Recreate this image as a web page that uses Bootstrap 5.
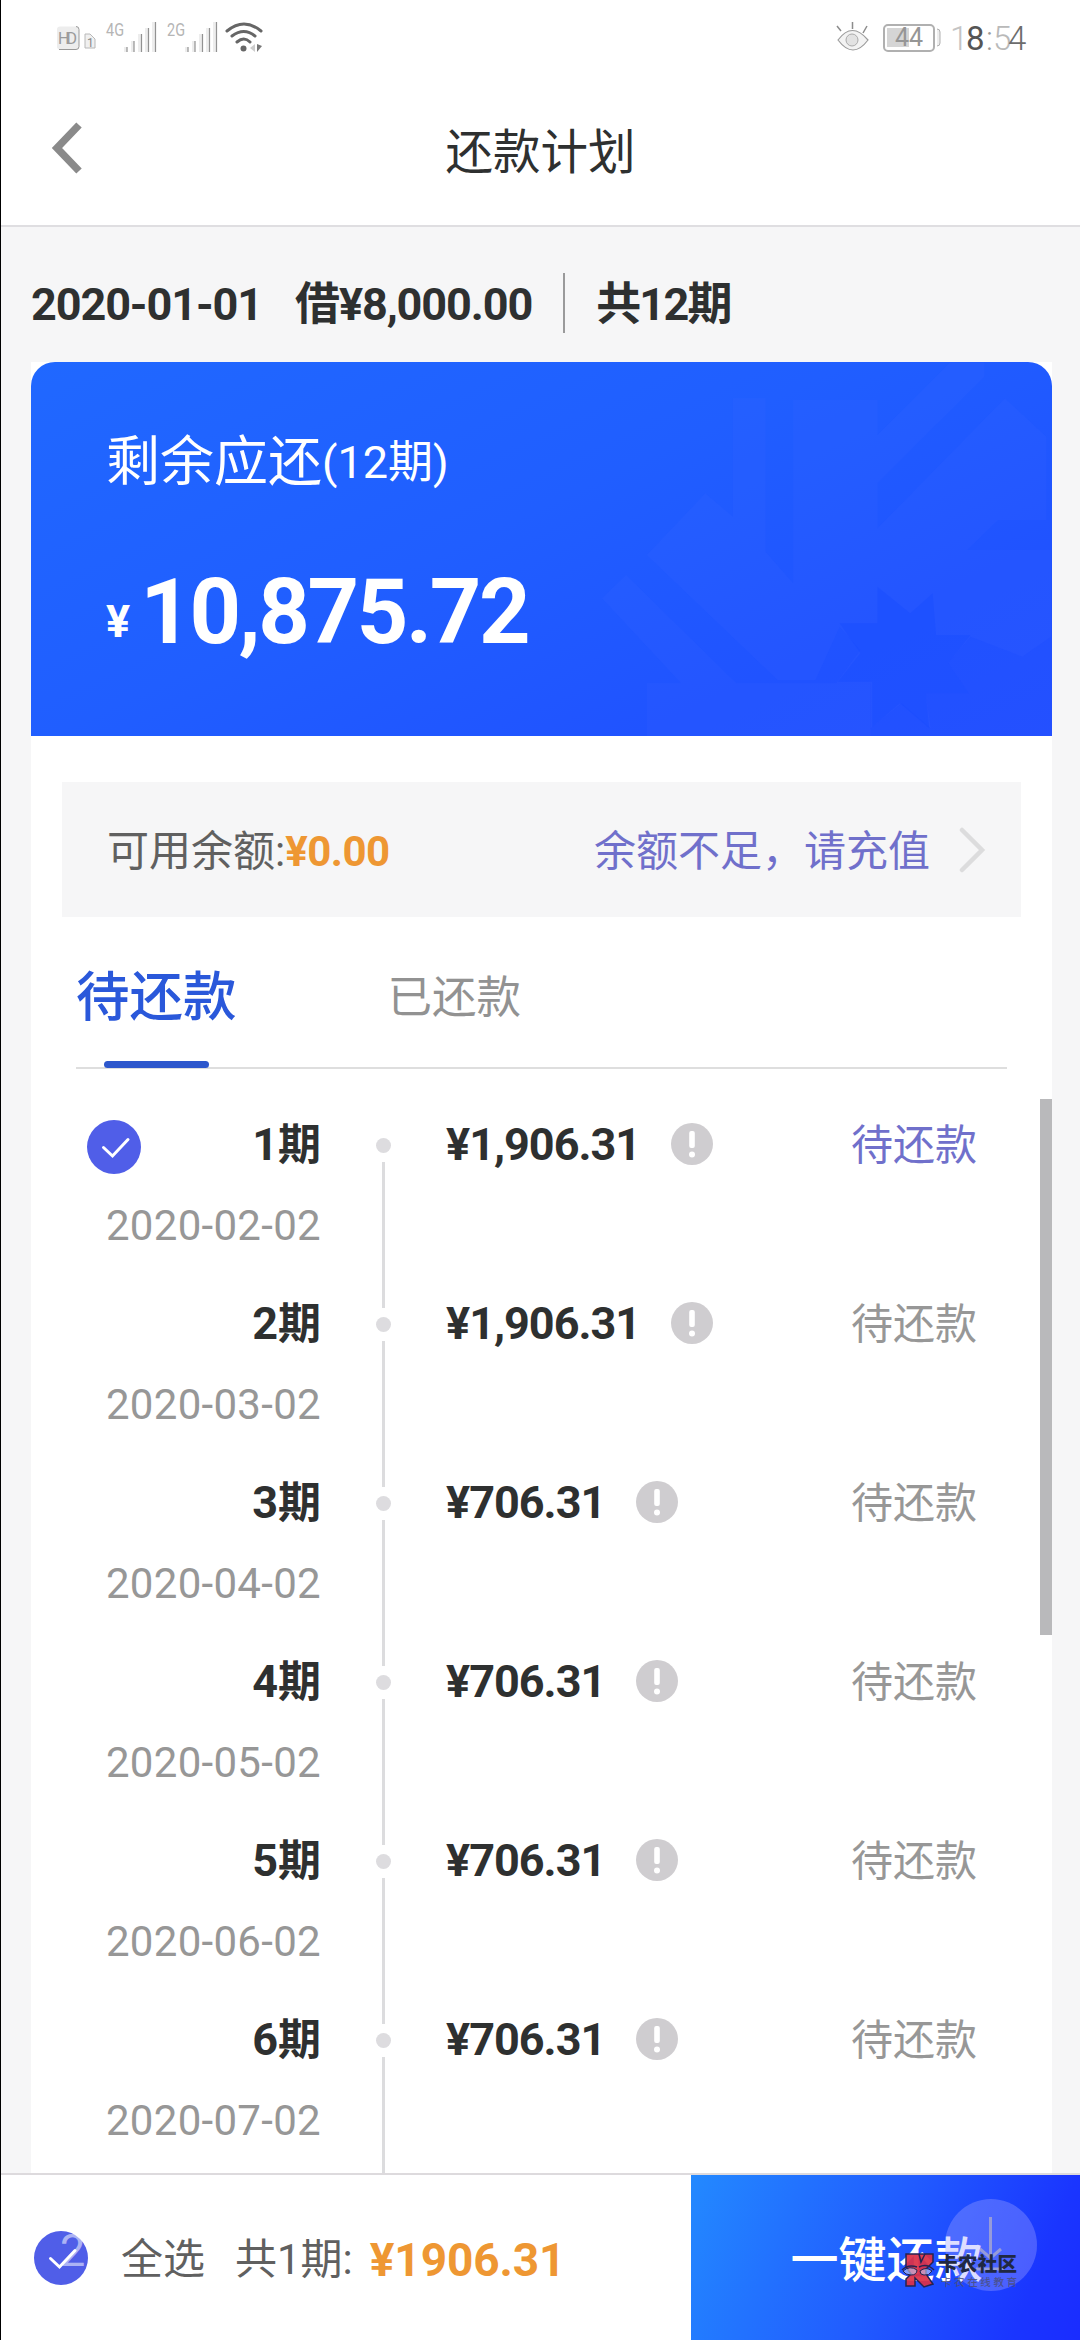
<!DOCTYPE html>
<html lang="zh-CN">
<head>
<meta charset="utf-8">
<meta name="viewport" content="width=device-width, initial-scale=1">
<title>还款计划</title>
<link href="https://cdn.jsdelivr.net/npm/bootstrap@5.3.0/dist/css/bootstrap.min.css" rel="stylesheet">
<style>
html,body{margin:0;height:2340px;overflow:hidden}
body{font-family:Roboto,"Noto Sans CJK SC",sans-serif;background:#f6f6f7;color:#2e3030;font-size:42px;line-height:60px}
.screen{height:2340px;border-left:1px solid #000}
.screen *{white-space:nowrap}
.status-bar{height:76px;padding:0 49px 0 0}
.app-head{height:149px;padding-top:4px}
.head-wrap{border-bottom:2px solid #dfdee1}
.app-title{font-size:47.5px}
.back-btn{left:49px;top:44px}
.loan-line{height:135px;padding:21px 0 0 30px;font-size:45px;font-weight:700;letter-spacing:-1.100px}
.loan-line .rule{width:2px;height:60px;background:#9a9a9b;margin:0 31px 4px 31px}
.ln-date{width:264px}
.ln-n{letter-spacing:-1.800px}
.panel{margin:0 28px 0 30px;width:1021px;height:1811px;overflow:hidden}
.due-card{height:374px;border-radius:24px 24px 0 0;background:linear-gradient(155deg,#2068ff 0%,#205eff 45%,#2052ff 80%,#2450ff 100%);padding:71px 0 0 75px}
.due-card svg{left:0;top:0}
.due-title{font-size:54px}
.due-title small{font-size:45px}
.due-sum{margin-top:70px;line-height:100px;font-size:90px;font-weight:700;letter-spacing:-2.4px}
.due-sum .yen{font-size:45px;line-height:60px;margin:0 10px 11px 0;letter-spacing:0}
.balance{margin:46px 31px 0;height:135px;background:#f6f6f7;padding:4px 34px 0 45px;color:#606060}
.gold{color:#ee9733;font-weight:700;letter-spacing:-.5px}
.tab-bar{margin:0 45px;height:152px;border-bottom:2px solid #dedede;color:#929292;font-size:44.500px}
.tab-on{font-size:53.5px;font-weight:500;color:#2a58da;height:150px;padding-top:51px}
.tab-on::after{content:"";left:28px;bottom:-1px;width:105px;height:7px;border-radius:4px;background:#2d57cc;position:absolute}
.tab-off{margin-left:151px;padding-top:51px}
.sched{height:1104px;padding-top:30px}
.term{height:179px}
.when{width:290px;padding:16px 0 0 56px}
.when .period{font-size:45px;font-weight:700}
.when .period svg{margin-top:3px}
.when .period i{font-style:normal;font-size:43px}
.when .day{color:#979797;margin-top:21px;letter-spacing:.3px}
.track{width:15px;margin-left:55px;padding-top:39px}
.dot{width:15px;height:15px;flex:none;border-radius:50%;background:#dddcdf}
.track .seg{width:3px;height:146px;flex:none;margin-top:9px;background:#dcdcde}
.sum{margin-left:55px;height:60px;margin-top:16px;font-size:45px;font-weight:700;letter-spacing:-1px}
.sum svg{margin-left:31px;margin-bottom:2px}
.state{margin:17px 75px 0 auto;color:#979797}
.violet,.state.violet{color:#7070cb}
.thumb{right:0;top:0;width:12px;height:536px;background:#b9b9bb}
.pay-bar{height:167px;border-top:2px solid #dddadd;background:#fff;color:#606060}
.pay-left{padding:5px 0 0 33px;width:690px}
.pay-left svg{margin-bottom:4px}
.all{margin-left:33px}
.cnt{margin-left:30px}
.total{margin-left:17px;font-size:46px;letter-spacing:-.1px}
.pay-btn{border:0;border-radius:0;width:389px;background:linear-gradient(112deg,#2389ff 0%,#215bff 50%,#1a35ff 85%,#1a2cff 100%);font-size:48px;font-weight:500;color:#fff;padding:7px 0 0 2px}
.pay-btn svg{left:200px;top:15px}
</style>
</head>
<body>
<svg width="0" height="0" class="position-absolute">
  <symbol id="info" viewBox="0 0 42 42"><circle cx="21" cy="21" r="21" fill="#cfcdd0"/><rect x="18.200" y="8" width="5.600" height="17" rx="2" fill="#fff"/><circle cx="21" cy="31.500" r="3" fill="#fff"/></symbol>
  <symbol id="tick" viewBox="0 0 54 54"><circle cx="27" cy="27" r="27" fill="#505ee8"/><path d="M16.500 27.500l9 8.500 15.500-16.500" fill="none" stroke="#fff" stroke-width="3" stroke-linecap="round"/></symbol>
</svg>
<div class="screen d-flex flex-column">
  <header class="head-wrap bg-white">
    <div class="status-bar d-flex justify-content-between">
      <svg width="280" height="76" viewBox="1 0 280 76" font-family="Roboto,sans-serif">
        <rect x="57" y="26.500" width="22" height="23" rx="3" fill="#ededed"/><path d="M59 49.500h17q3 0 3-3v-17q0-3-3-3" fill="none" stroke="#999"/>
        <text x="58" y="44" font-size="16" fill="#9a9a9a" textLength="19">HD</text>
        <path d="M85 34h5l5 5v9H85z" fill="#f0f0f0" stroke="#b8b8b8"/><text x="87" y="47" font-size="12" fill="#888">1</text>
        <g font-size="19" fill="#b5b5b5"><text x="106" y="35.500" textLength="18" lengthAdjust="spacingAndGlyphs">4G</text><text x="167" y="35.500" textLength="18" lengthAdjust="spacingAndGlyphs">2G</text></g>
        <g fill="#ededed"><path id="bars" d="M124 47h3v5h-3zM131 41h3v11h-3zM138 34h3v18h-3zM145 28h3v24h-3zM152 22h3v30h-3z"/><use href="#bars" x="61"/></g>
        <g stroke="#929292" stroke-width="1.200"><path id="edge" d="M127 47v5M134 41v11M141.500 34v18M148.500 28v24M155.500 22v30"/><use href="#edge" x="61"/></g>
        <g fill="none" stroke="#666" stroke-width="3" stroke-linecap="round"><path d="M227 31Q244 17 261 31M232 36Q244 27 255 36M237 42Q244 36 250 42"/></g>
        <circle cx="243.500" cy="48.500" r="3" fill="#666"/><path d="M255 44v8l-5-4z" fill="#ccc"/><path d="M257 44v8l5-6z" fill="#777"/>
      </svg>
      <svg width="205" height="76" viewBox="825 0 205 76" font-family="Roboto,sans-serif">
        <path d="M837 40q14-19 30 0q-15 20-30 0z" fill="#f3f3f3" stroke="#9b9b9b" stroke-width="1.200"/><circle cx="851" cy="40" r="6" fill="#e2e2e2" stroke="#aaa"/>
        <path d="M836 26l4 5M851.500 22v7M866 26l-4 7" stroke="#8c8c8c" stroke-width="1.500"/>
        <rect x="883" y="25" width="50" height="26" rx="4" fill="#fff" stroke="#b0b0b0" stroke-width="2"/><rect x="886" y="28" width="22" height="19" fill="#d5d5d5"/>
        <text x="894" y="46" font-size="25" fill="#969696" textLength="28">44</text><path d="M936 29q3 0 3 3v11q0 3-3 3" fill="#eee" stroke="#b0b0b0"/>
        <g font-size="33" font-weight="300"><text x="949" y="50" fill="#c4c4c4">1</text><text x="965" y="50" fill="#555" font-weight="400">8</text><text x="985" y="50" fill="#999">:</text><text x="992" y="50" fill="#b9b9b9">5</text><text x="1007" y="50" fill="#6c6c6c">4</text></g>
      </svg>
    </div>
    <div class="app-head position-relative d-flex align-items-center justify-content-center">
      <svg class="back-btn position-absolute" width="36" height="56" viewBox="0 0 36 56"><path d="M29 5L7 28l22 23" fill="none" stroke="#8a8a8a" stroke-width="7.500"/></svg>
      <div class="app-title">还款计划</div>
    </div>
  </header>

  <div class="loan-line d-flex align-items-center">
    <span class="ln-date">2020-01-01</span><span class="ln-amt">借¥8,000.00</span><span class="rule"></span><span class="ln-n">共12期</span>
  </div>

  <main class="panel bg-white">
    <section class="due-card position-relative text-white">
      <svg class="position-absolute" width="1020" height="374" viewBox="0 0 1020 374">
        <g transform="translate(509 -22) scale(.3444 .3333)">
          <g fill="#4d6cff" fill-opacity=".11">
            <path d="M560 175h95v460L735 730V180H980V285L1190 68H1290V110L980 430V565L1350 175L1470 290V540H1330L1240 630H1484V890L1400 950L1250 890L1185 970L1245 1060H1120L1135 1165L1050 1090L960 1165V1030H860L930 930L870 860L800 1020H690L310 645L480 460L560 530z"/>
            <path d="M180 775L250 705L570 1030H960V1190H310V1030H410z"/>
          </g>
          <path d="M980 740L1075 820L1140 760L1150 885H1250L1185 970L1245 1060H1120L1130 1165L1045 1090L965 1160V1025H865L930 940L870 850H980z" fill="#164bff" fill-opacity=".4"/>
        </g>
      </svg>
      <div class="due-title d-flex align-items-center position-relative"><span>剩余应还</span><small>(12期)</small></div>
      <div class="due-sum d-flex align-items-end position-relative"><span class="yen">¥</span><span>10,875.72</span></div>
    </section>

    <section class="balance d-flex align-items-center">
      <span>可用余额:</span><span class="gold">¥0.00</span>
      <span class="violet ms-auto">余额不足，请充值</span>
      <svg class="ms-4 mb-1" width="33" height="46" viewBox="2 0 33 46"><path d="M10 3l20 20L10 43" fill="none" stroke="#dcdcdd" stroke-width="4.500" stroke-linecap="round"/></svg>
    </section>

    <nav class="tab-bar d-flex">
      <div class="tab-on position-relative">待还款</div><div class="tab-off">已还款</div>
    </nav>

    <section class="sched">
      <div class="position-relative">
      <div class="thumb position-absolute"></div>
      <div class="term d-flex">
        <div class="when text-end"><div class="period d-flex align-items-center"><svg class="me-auto" width="54" height="54"><use href="#tick"/></svg><span>1<i>期</i></span></div><div class="day">2020-02-02</div></div>
        <div class="track d-flex flex-column align-items-center"><div class="dot"></div><div class="seg"></div></div>
        <div class="sum d-flex align-items-center"><span>¥1,906.31</span><svg width="42" height="42"><use href="#info"/></svg></div>
        <div class="state violet">待还款</div>
      </div>
      <div class="term d-flex">
        <div class="when text-end"><div class="period">2<i>期</i></div><div class="day">2020-03-02</div></div>
        <div class="track d-flex flex-column align-items-center"><div class="dot"></div><div class="seg"></div></div>
        <div class="sum d-flex align-items-center"><span>¥1,906.31</span><svg width="42" height="42"><use href="#info"/></svg></div>
        <div class="state">待还款</div>
      </div>
      <div class="term d-flex">
        <div class="when text-end"><div class="period">3<i>期</i></div><div class="day">2020-04-02</div></div>
        <div class="track d-flex flex-column align-items-center"><div class="dot"></div><div class="seg"></div></div>
        <div class="sum d-flex align-items-center"><span>¥706.31</span><svg width="42" height="42"><use href="#info"/></svg></div>
        <div class="state">待还款</div>
      </div>
      <div class="term d-flex">
        <div class="when text-end"><div class="period">4<i>期</i></div><div class="day">2020-05-02</div></div>
        <div class="track d-flex flex-column align-items-center"><div class="dot"></div><div class="seg"></div></div>
        <div class="sum d-flex align-items-center"><span>¥706.31</span><svg width="42" height="42"><use href="#info"/></svg></div>
        <div class="state">待还款</div>
      </div>
      <div class="term d-flex">
        <div class="when text-end"><div class="period">5<i>期</i></div><div class="day">2020-06-02</div></div>
        <div class="track d-flex flex-column align-items-center"><div class="dot"></div><div class="seg"></div></div>
        <div class="sum d-flex align-items-center"><span>¥706.31</span><svg width="42" height="42"><use href="#info"/></svg></div>
        <div class="state">待还款</div>
      </div>
      <div class="term d-flex">
        <div class="when text-end"><div class="period">6<i>期</i></div><div class="day">2020-07-02</div></div>
        <div class="track d-flex flex-column align-items-center"><div class="dot"></div><div class="seg"></div></div>
        <div class="sum d-flex align-items-center"><span>¥706.31</span><svg width="42" height="42"><use href="#info"/></svg></div>
        <div class="state">待还款</div>
      </div>
      </div>
    </section>
  </main>

  <footer class="pay-bar d-flex">
    <div class="pay-left d-flex align-items-center">
      <svg class="overflow-visible" width="54" height="54" viewBox="0 0 54 54"><use href="#tick" width="54" height="54"/><text x="26" y="35" font-size="45" font-family="Roboto,sans-serif" fill="#fff" fill-opacity=".55">2</text></svg>
      <span class="all">全选</span><span class="cnt">共1期:</span><span class="gold total">¥1906.31</span>
    </div>
    <button class="pay-btn btn position-relative" type="button">一键还款
      <svg class="position-absolute" width="189" height="120" viewBox="891 2190 189 120" font-family="'Noto Sans CJK SC',sans-serif">
        <circle cx="991" cy="2245" r="46" fill="#a0a4ff" fill-opacity=".36"/>
        <path d="M990.500 2217v39M980 2249l10.500 9 10.500-9M976 2269h28" fill="none" stroke="#a9a9cf" stroke-opacity=".8" stroke-width="3"/>
        <path d="M906 2254h27v8l-7 7v5l7 10-9 3-9-9v8h-9v-7l5-5-5-7z" fill="#dc3047" fill-opacity=".93" stroke="#252451" stroke-width="1.500"/>
        <path d="M919 2254l2 8 4-8M902 2270q6-6 15-3M919 2267q8-4 15 3" fill="none" stroke="#252451" stroke-width="1.500"/>
        <path d="M903 2271q7-6 14-1q0 5-6 5q-6 0-8-4zM920 2271q6-5 12 0q-3 5-8 4q-4 0-4-4z" fill="#c5cdfa" fill-opacity=".6" stroke="#252451" stroke-width="1"/>
        <text x="938" y="2271" font-size="19.500" font-weight="900" fill="#202842" textLength="79">卡农社区</text>
        <text x="941" y="2285.500" font-size="10.500" font-weight="500" fill="#4a4e7c" fill-opacity=".85" textLength="76">卡农在线教育</text>
      </svg>
    </button>
  </footer>
</div>
<script src="https://cdn.jsdelivr.net/npm/bootstrap@5.3.0/dist/js/bootstrap.bundle.min.js"></script>
</body>
</html>
